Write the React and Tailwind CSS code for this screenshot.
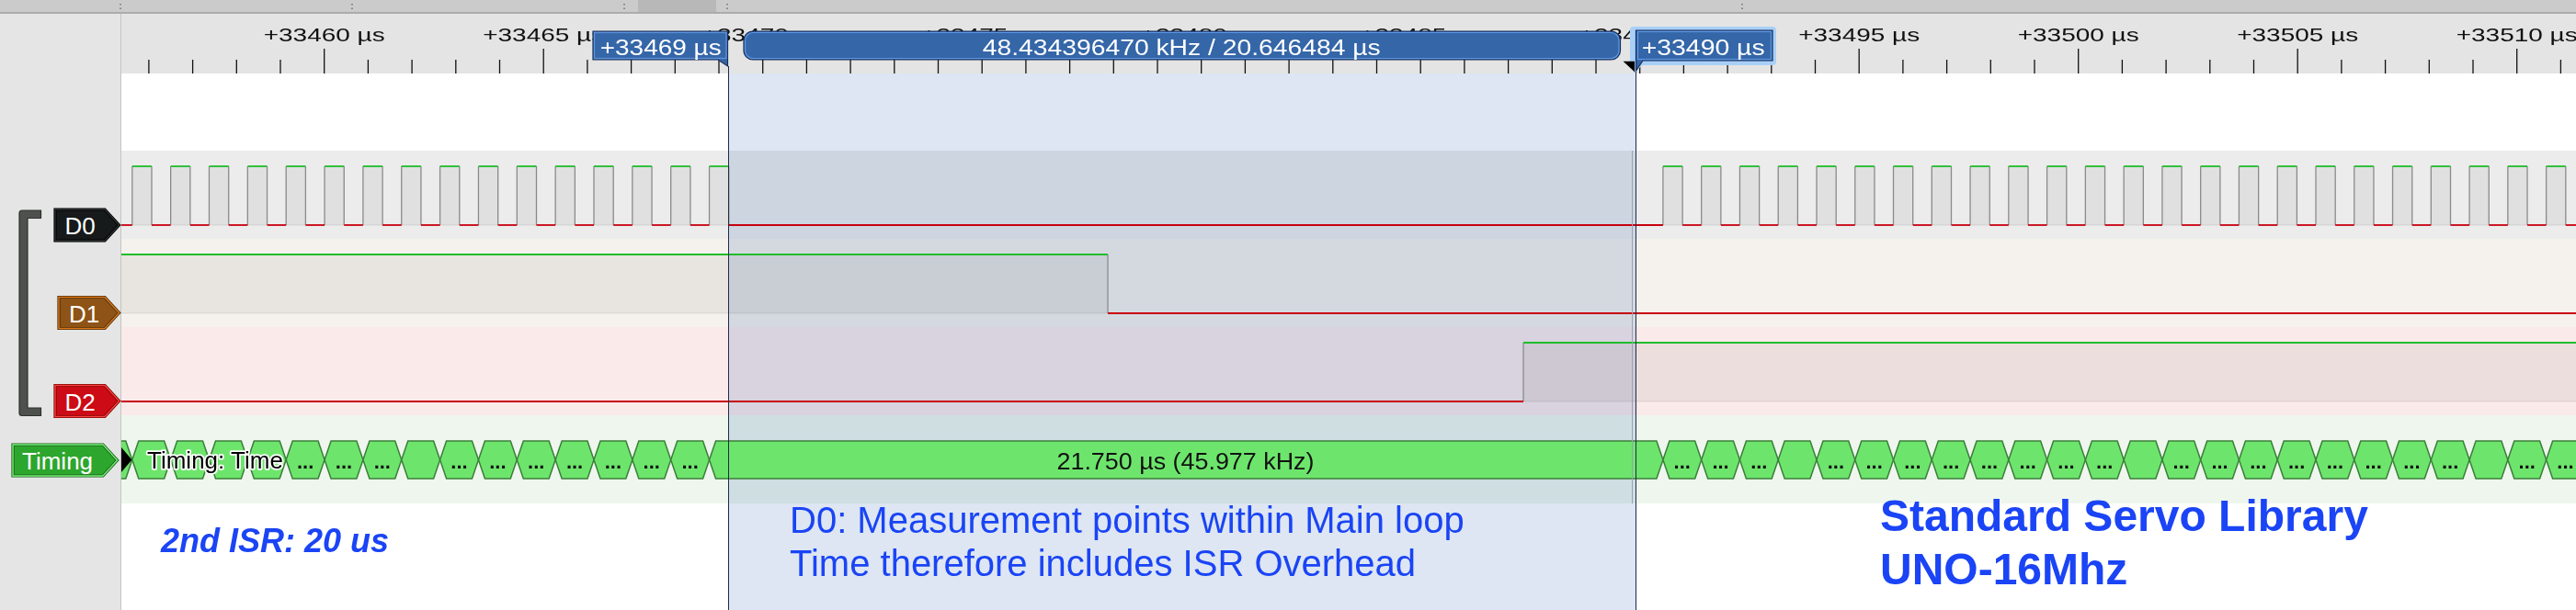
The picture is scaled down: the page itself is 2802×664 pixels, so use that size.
import React from "react";

// page-space helpers: main area starts at x=132, y=15
const tickX = (t) => 352.7 + (t - 33460) * 47.7;

const D0 = (() => {
  const rises = [];
  for (let n = 0; n < 16; n++) rises.push(143.8 + n * 41.85);
  for (let n = 0; n < 24; n++) rises.push(1808.9 + n * 41.77);
  const segs = [];
  let x = 132;
  rises.forEach((r) => {
    segs.push([x, r, 0]);
    segs.push([r, r + 21.2, 1]);
    x = r + 21.2;
  });
  segs.push([x, 2802, 0]);
  return segs;
})();
const D1 = [[132, 1205, 1], [1205, 2802, 0]];
const D2 = [[132, 1657, 0], [1657, 2802, 1]];

const TopBar = () => {
  const marks = [131, 383, 679, 791, 1895];
  return (
    <div className="h-[15px] shrink-0 bg-[#cbcbcb] border-b-2 border-[#acacac]">
      <svg width="2802" height="13" className="block">
        <rect x="694" y="0" width="85" height="13" fill="#b8b8b8" />
        {marks.map((x) => (
          <g key={x} fill="#707070">
            <rect x={x - 0.75} y="4" width="1.5" height="1.5" />
            <rect x={x - 0.75} y="8.5" width="1.5" height="1.5" />
          </g>
        ))}
      </svg>
    </div>
  );
};

const Flag = ({ cy, x0, shoulder, tip, fill, inner, outer, text, tx }) => {
  const pts = `${x0},${cy - 17} ${shoulder},${cy - 17} ${tip},${cy} ${shoulder},${cy + 17} ${x0},${cy + 17}`;
  return (
    <g>
      <polygon points={pts} fill={fill} stroke={outer} strokeWidth="3.2" />
      <polygon points={pts} fill="none" stroke={inner} strokeWidth="1.4" />
      <text x={tx} y={cy + 10} fontSize="26" fill="#fff">
        {text}
      </text>
    </g>
  );
};

const LeftPanel = () => (
  <aside className="w-[132px] shrink-0 bg-[#e5e5e5] border-r border-[#c4c4c4] flex flex-col">
    <div className="h-[149px]" />
    <svg width="131" height="288" className="block overflow-visible">
      {/* group bracket */}
      <path
        d="M44.5,65 H24 Q21,65 21,68 V285.5 Q21,288.5 24,288.5 H44.5 V280 H30 V73.5 H44.5 Z"
        fill="#4f514f"
        stroke="#2f312f"
        strokeWidth="1.2"
      />
      <Flag cy={81} x0={60} shoulder={114} tip={129.5} fill="#161a1a" inner="#2c3030" outer="#000" text="D0" tx={70.5} />
      <Flag cy={176.5} x0={64} shoulder={114} tip={129.5} fill="#8e5316" inner="#de7a1c" outer="#4a2a05" text="D1" tx={75} />
      <Flag cy={272.5} x0={60} shoulder={114} tip={129.5} fill="#cc0b16" inner="#ff4242" outer="#7a0000" text="D2" tx={70.5} />
    </svg>
    <svg width="131" height="96" className="block">
      <Flag cy={49} x0={14} shoulder={112} tip={127.5} fill="#2da62d" inner="#72f472" outer="#1c5a1c" text="Timing" tx={24} />
    </svg>
  </aside>
);

const Ruler = () => {
  const ticks = [];
  for (let t = 33456; t <= 33511; t++) ticks.push(t);
  return (
    <div className="h-[65px] shrink-0 bg-[#e4e4e4]">
      <svg width="2670" height="65" viewBox="132 15 2670 65" className="block">
        {ticks.map((t) => {
          const x = tickX(t);
          const major = t % 5 === 0;
          return <line key={t} x1={x} x2={x} y1={major ? 53 : 65} y2={80} stroke="#111" strokeWidth="1.3" />;
        })}
        {ticks
          .filter((t) => t % 5 === 0 && t >= 33460)
          .map((t) => (
            <text key={"l" + t} x={tickX(t) - 66} y="45" fontSize="21" textLength="132" lengthAdjust="spacingAndGlyphs" fill="#111">
              {`+${t} µs`}
            </text>
          ))}
      </svg>
    </div>
  );
};

const Wave = ({ segs }) => (
  <svg width="2670" height="96" viewBox="132 0 2670 96" className="relative z-20 block">
    {segs.map(([a, b, h], i) =>
      h ? (
        <g key={"f" + i}>
          <rect x={a} y={17} width={b - a} height={64} fill="rgba(0,0,0,0.05)" />
          <line x1={a} x2={b} y1={81} y2={81} stroke="rgba(0,0,0,0.06)" strokeWidth="1.5" />
        </g>
      ) : null
    )}
    {segs.slice(1).map(([a], i) => (
      <line key={"e" + i} x1={a} x2={a} y1={17} y2={81} stroke="#8a8a8a" strokeWidth="1.3" />
    ))}
    {segs.map(([a, b, h], i) => (
      <line key={"l" + i} x1={a} x2={b} y1={h ? 17 : 81} y2={h ? 17 : 81} stroke={h ? "#1fbd2b" : "#c8000f"} strokeWidth="1.8" />
    ))}
  </svg>
);

const hexPath = (a, b) => {
  const t = 7;
  return `M${a},48.5 L${a + t},28 L${b - t},28 L${b},48.5 L${b - t},69 L${a + t},69 Z`;
};

const TimingTrack = () => {
  const hexes = [];
  for (let n = -1; n <= 14; n++) {
    const a = 143.8 + n * 41.85;
    hexes.push({ a, b: a + 41.85, dots: n >= 4 && n !== 7 });
  }
  hexes.push({ a: 143.8 + 15 * 41.85, b: 1808.9, big: true });
  for (let n = 0; n < 24; n++) {
    const a = 1808.9 + n * 41.77;
    hexes.push({ a, b: a + 41.77, dots: n !== 3 && n !== 12 && n !== 21 });
  }
  return (
    <svg width="2670" height="96" viewBox="132 0 2670 96" className="relative z-20 block">
      {hexes.map((h, i) => (
        <path key={i} d={hexPath(h.a, h.b)} fill="#6de56c" stroke="#3c7d3a" strokeWidth="1.5" />
      ))}
      {hexes
        .filter((h) => h.dots)
        .map((h, i) => (
          <text key={"d" + i} x={(h.a + h.b) / 2} y="58" textAnchor="middle" fontSize="22" fontWeight="bold" fill="#111">
            ...
          </text>
        ))}
      <text x={1149.5} y="58.7" fontSize="26" textLength="280" lengthAdjust="spacingAndGlyphs" fill="#111">
        21.750 µs (45.977 kHz)
      </text>
      <polygon points="132,35 143.5,48.5 132,62" fill="#000" />
      <text x="160" y="58" fontSize="26" fill="#000" stroke="#fff" strokeWidth="3.5" paintOrder="stroke" strokeLinejoin="round">
        Timing: Time
      </text>
    </svg>
  );
};

const Markers = () => (
  <svg width="2670" height="65" viewBox="132 15 2670 65" className="absolute left-0 top-0 z-30 block">
    {/* left cursor label */}
    <path d="M645,34 H791.5 V72 L781,65 H645 Z" fill="#3566a8" stroke="#1a2f57" strokeWidth="1.2" />
    <rect x="646.5" y="35.5" width="143.5" height="28" fill="none" stroke="#5f95dd" strokeWidth="1.2" />
    <text x="652.7" y="60" fontSize="23" textLength="132" lengthAdjust="spacingAndGlyphs" fill="#fff">
      +33469 µs
    </text>

    {/* measurement bar */}
    <rect x="809" y="34" width="953.5" height="31" rx="10" fill="#3466a8" stroke="#1a2f57" strokeWidth="1.2" />
    <rect x="810.5" y="35.5" width="950.5" height="28" rx="8.5" fill="none" stroke="#5f98e6" strokeWidth="1.2" />
    <text x="1068.75" y="60" fontSize="23" textLength="433" lengthAdjust="spacingAndGlyphs" fill="#fff">
      48.434396470 kHz / 20.646484 µs
    </text>

    {/* right cursor label (selected) */}
    <rect x="1773" y="29" width="159" height="42" rx="4" fill="#a8cff8" />
    <polygon points="1774,64 1793,64 1777.5,80" fill="#a8cff8" />
    <polygon points="1765.6,66.7 1778,66.7 1778,78.3" fill="#000" />
    <path d="M1780,33 H1928 V66 H1787 L1779.5,77 V33 Z" fill="#3466a8" stroke="#1a2f57" strokeWidth="1.2" />
    <rect x="1781.5" y="34.5" width="145" height="30" fill="none" stroke="#5f98e6" strokeWidth="1.2" />
    <text x="1785.7" y="60" fontSize="23" textLength="134" lengthAdjust="spacingAndGlyphs" fill="#fff">
      +33490 µs
    </text>
  </svg>
);

const Notes = () => (
  <div className="relative z-20 flex h-[116px] shrink-0 items-start text-[#1a44f5]">
    <div className="w-[727px] pl-[43px] mt-[23px] text-[36px] leading-[36px] font-bold italic">2nd ISR: 20 us</div>
    <div className="w-[1186px] mt-[-5px] text-[40px] leading-[47px]">
      D0: Measurement points within Main loop
      <br />
      Time therefore includes ISR Overhead
    </div>
    <div className="mt-[-15px] text-[48px] leading-[58px] font-bold whitespace-nowrap">
      Standard Servo Library
      <br />
      UNO-16Mhz
    </div>
  </div>
);

export default function App() {
  return (
    <div className="w-[2802px] h-[664px] overflow-hidden bg-white font-['Liberation_Sans',Arial,sans-serif] flex flex-col">
      <TopBar />
      <div className="flex flex-1 min-h-0">
        <LeftPanel />
        <main className="relative isolate w-[2670px] flex flex-col">
          <Ruler />
          <div className="h-[84px] shrink-0 bg-white" />
          <div className="h-[96px] shrink-0 bg-[#ececec]">
            <Wave segs={D0} />
          </div>
          <div className="h-[96px] shrink-0 bg-[#f5f1ec]">
            <Wave segs={D1} />
          </div>
          <div className="h-[96px] shrink-0 bg-[#faeaea]">
            <Wave segs={D2} />
          </div>
          <div className="h-[96px] shrink-0 bg-[#eef6ee]">
            <TimingTrack />
          </div>
          <Notes />

          {/* selection range */}
          <div className="absolute left-[660px] top-[65px] bottom-0 w-[987px] bg-[#dde6f2] mix-blend-multiply z-10" />
          <div className="absolute left-[1643px] top-[149px] h-[384px] w-px bg-[#9aa3ad] z-20" />
          <div className="absolute left-[659.5px] top-[57px] bottom-0 w-[1.5px] bg-[#1c2b4a] z-30" />
          <div className="absolute left-[1646.5px] top-[62px] bottom-0 w-[1.5px] bg-[#1c2b4a] z-30" />
          <Markers />
        </main>
      </div>
    </div>
  );
}
